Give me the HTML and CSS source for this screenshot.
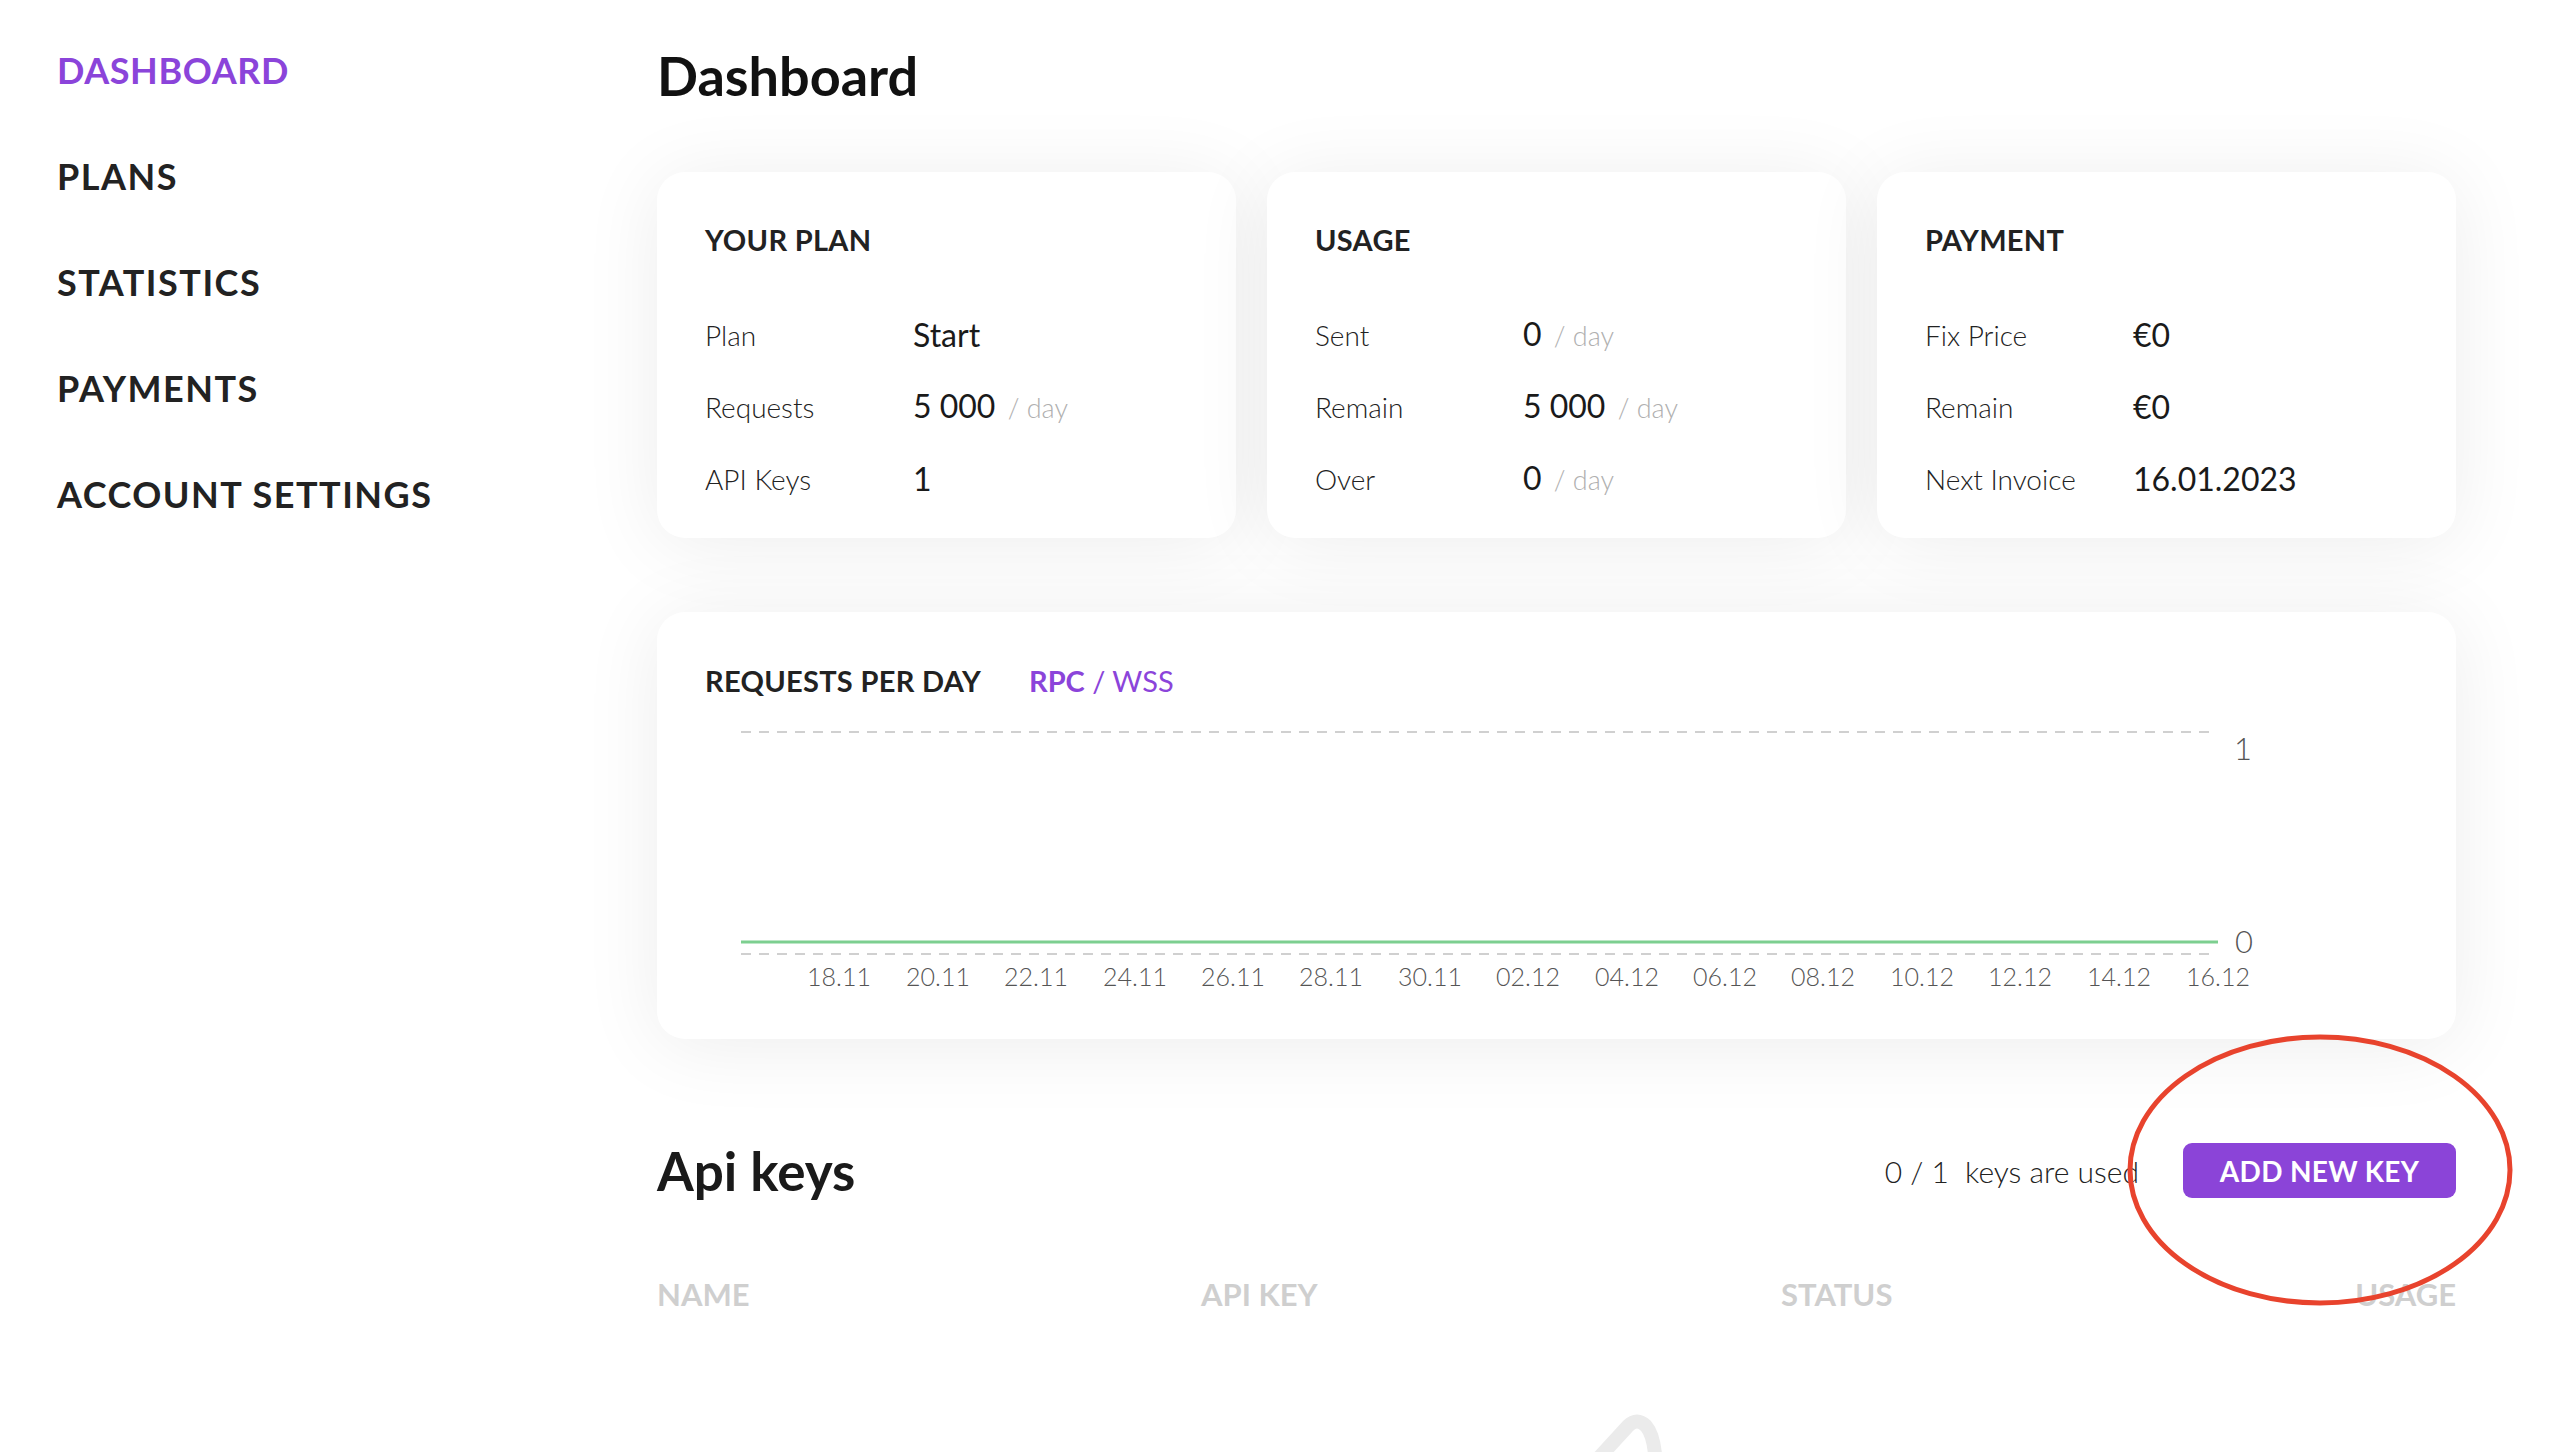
FILE: index.html
```html
<!DOCTYPE html>
<html lang="en">
<head>
<meta charset="utf-8">
<title>Dashboard</title>
<link rel="stylesheet" href="styles.css">
</head>
<body>
<div class="layout">
  <nav class="sidebar">
    <a class="nav-item active">DASHBOARD</a>
    <a class="nav-item">PLANS</a>
    <a class="nav-item">STATISTICS</a>
    <a class="nav-item">PAYMENTS</a>
    <a class="nav-item">ACCOUNT SETTINGS</a>
  </nav>
  <main class="main">
    <h1 class="page-title">Dashboard</h1>
    <section class="cards">
      <div class="card">
        <h2 class="card-title">YOUR PLAN</h2>
        <div class="rows">
          <div class="row"><span class="label">Plan</span><span class="value">Start</span></div>
          <div class="row"><span class="label">Requests</span><span class="value">5 000 <span class="unit">/ day</span></span></div>
          <div class="row"><span class="label">API Keys</span><span class="value">1</span></div>
        </div>
      </div>
      <div class="card">
        <h2 class="card-title">USAGE</h2>
        <div class="rows">
          <div class="row"><span class="label">Sent</span><span class="value">0 <span class="unit">/ day</span></span></div>
          <div class="row"><span class="label">Remain</span><span class="value">5 000 <span class="unit">/ day</span></span></div>
          <div class="row"><span class="label">Over</span><span class="value">0 <span class="unit">/ day</span></span></div>
        </div>
      </div>
      <div class="card">
        <h2 class="card-title">PAYMENT</h2>
        <div class="rows">
          <div class="row"><span class="label">Fix Price</span><span class="value">€0</span></div>
          <div class="row"><span class="label">Remain</span><span class="value">€0</span></div>
          <div class="row"><span class="label">Next Invoice</span><span class="value">16.01.2023</span></div>
        </div>
      </div>
    </section>

    <section class="card chart-card">
      <div class="chart-head">
        <h2 class="card-title">REQUESTS PER DAY</h2>
        <div class="switch"><span class="sw-on">RPC</span> / WSS</div>
      </div>
      <svg class="chart" width="1703" height="290" viewBox="0 0 1703 290">
        <line x1="36" y1="21" x2="1506" y2="21" stroke="#d0d0d0" stroke-width="2" stroke-dasharray="10 8"/>
        <line x1="36" y1="243" x2="1506" y2="243" stroke="#d0d0d0" stroke-width="2" stroke-dasharray="10 8"/>
        <line x1="36" y1="231" x2="1513" y2="231" stroke="#7dcf90" stroke-width="3"/>
        <g class="ylab">
          <text x="1538" y="49" text-anchor="middle">1</text>
          <text x="1539" y="242" text-anchor="middle">0</text>
        </g>
        <g class="xlab" text-anchor="middle">
          <text x="134" y="275">18.11</text>
          <text x="233" y="275">20.11</text>
          <text x="331" y="275">22.11</text>
          <text x="430" y="275">24.11</text>
          <text x="528" y="275">26.11</text>
          <text x="626" y="275">28.11</text>
          <text x="725" y="275">30.11</text>
          <text x="823" y="275">02.12</text>
          <text x="922" y="275">04.12</text>
          <text x="1020" y="275">06.12</text>
          <text x="1118" y="275">08.12</text>
          <text x="1217" y="275">10.12</text>
          <text x="1315" y="275">12.12</text>
          <text x="1414" y="275">14.12</text>
          <text x="1513" y="275">16.12</text>
        </g>
      </svg>
    </section>

    <section class="keys">
      <div class="keys-head">
        <h2 class="section-title">Api keys</h2>
        <div class="keys-actions">
          <span class="keys-used">0 / 1&nbsp; keys are used</span>
          <button class="btn">ADD NEW KEY</button>
        </div>
        <svg class="annot" width="392" height="278" viewBox="0 0 392 278">
          <ellipse cx="196" cy="139" rx="190" ry="133" fill="none" stroke="#e8432d" stroke-width="5"/>
        </svg>
      </div>
      <div class="table-head">
        <span>NAME</span>
        <span>API KEY</span>
        <span>STATUS</span>
        <span class="th-right">USAGE</span>
      </div>
      <div class="empty">
        <svg width="300" height="40" viewBox="0 0 300 40">
          <path d="M188 48 L221 12 Q230 3 239 12 Q246 20 248 40" fill="none" stroke="#ebebeb" stroke-width="14" stroke-linecap="round" stroke-linejoin="round"/>
        </svg>
      </div>
    </section>
  </main>
</div>
</body>
</html>
```

FILE: styles.css
```css
* { box-sizing: border-box; }
html, body { margin: 0; padding: 0; background: #fff; }
body {
  font-family: "Lato", "Liberation Sans", sans-serif;
  color: #222;
  width: 2576px;
  height: 1452px;
  overflow: hidden;
}
.layout {
  display: flex;
  align-items: flex-start;
}
.sidebar {
  width: 657px;
  flex: none;
  padding: 49px 0 0 57px;
  display: flex;
  flex-direction: column;
  gap: 64px;
}
.nav-item {
  font-size: 36px;
  line-height: 42px;
  font-weight: 700;
  letter-spacing: 1.5px;
  color: #222;
}
.nav-item.active { color: #8b44da; letter-spacing: 0.6px; }

.main {
  width: 1799px;
  flex: none;
  padding-top: 46px;
}
.page-title {
  margin: 0;
  font-size: 54px;
  line-height: 60px;
  font-weight: 700;
  color: #111;
}
.cards {
  margin-top: 66px;
  display: grid;
  grid-template-columns: repeat(3, 1fr);
  gap: 31px;
}
.card {
  background: #fff;
  border-radius: 28px;
  box-shadow: 0 6px 80px rgba(0, 0, 0, 0.075);
  padding: 50px 48px 37px;
}
.card-title {
  margin: 0;
  font-size: 29px;
  line-height: 36px;
  font-weight: 700;
  color: #222;
  letter-spacing: 0.3px;
}
.rows {
  margin-top: 55px;
  display: flex;
  flex-direction: column;
  gap: 28px;
}
.row {
  display: flex;
  align-items: center;
  height: 44px;
  line-height: 44px;
}
.label {
  width: 208px;
  flex: none;
  font-size: 28px;
  font-weight: 300;
  color: #222;
}
.value {
  font-size: 32px;
  font-weight: 400;
  color: #1a1a1a;
}
.unit {
  font-size: 27px;
  font-weight: 300;
  color: #b0b0b0;
  margin-left: 4px;
}

.chart-card {
  margin-top: 74px;
  padding: 51px 48px 38px;
}
.chart-head {
  display: flex;
  align-items: baseline;
  gap: 48px;
}
.switch {
  font-size: 29px;
  line-height: 36px;
  color: #8b44da;
  font-weight: 400;
}
.sw-on { font-weight: 700; }
.chart {
  display: block;
  margin-top: 12px;
}
.ylab text {
  font-family: "Lato", "Liberation Sans", sans-serif;
  font-size: 31px;
  font-weight: 300;
  fill: #555;
}
.xlab text {
  font-family: "Lato", "Liberation Sans", sans-serif;
  font-size: 25px;
  font-weight: 300;
  fill: #555;
}

.keys {
  margin-top: 104px;
}
.keys-head {
  position: relative;
  display: flex;
  align-items: center;
  justify-content: space-between;
  height: 55px;
}
.section-title {
  margin: 0;
  font-size: 53px;
  line-height: 60px;
  font-weight: 700;
  color: #1a1a1a;
}
.keys-actions {
  display: flex;
  align-items: center;
  gap: 44px;
}
.keys-used {
  font-size: 30px;
  font-weight: 300;
  color: #222;
}
.btn {
  width: 273px;
  height: 55px;
  border: none;
  border-radius: 9px;
  background: #8b44d8;
  color: #fff;
  font-family: "Lato", "Liberation Sans", sans-serif;
  font-size: 28px;
  font-weight: 700;
  letter-spacing: 0.3px;
  padding: 0;
}
.annot {
  position: absolute;
  left: 1467px;
  top: -112px;
  pointer-events: none;
}
.table-head {
  margin-top: 76px;
  display: grid;
  grid-template-columns: 544px 580px 1fr auto;
  font-size: 31px;
  line-height: 40px;
  font-weight: 700;
  color: #cfcfcf;
}
.th-right { text-align: right; }
.empty {
  margin-top: 100px;
  display: flex;
  justify-content: center;
}
.empty svg { display: block; }
```
